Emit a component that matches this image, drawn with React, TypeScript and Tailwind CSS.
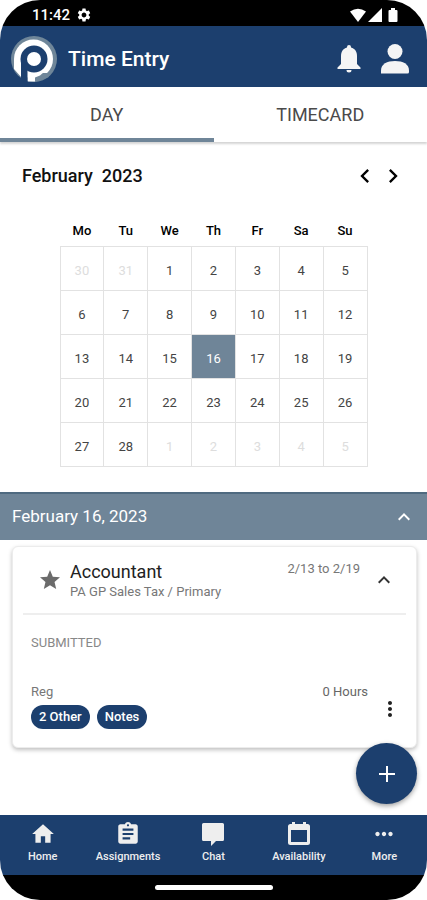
import { useState } from "react";
import type { ReactNode } from "react";
import {
  MdAssignment,
  MdHome,
  MdKeyboardArrowLeft,
  MdKeyboardArrowRight,
  MdKeyboardArrowUp,
  MdMoreHoriz,
  MdMoreVert,
  MdSettings,
  MdStar,
} from "react-icons/md";

const weekdays = ["Mo", "Tu", "We", "Th", "Fr", "Sa", "Su"];

const weeks = [
  [30, 31, 1, 2, 3, 4, 5],
  [6, 7, 8, 9, 10, 11, 12],
  [13, 14, 15, 16, 17, 18, 19],
  [20, 21, 22, 23, 24, 25, 26],
  [27, 28, 1, 2, 3, 4, 5],
];

function isOutside(week: number, day: number) {
  return (week === 0 && day > 20) || (week === 4 && day < 20);
}

function StatusBar() {
  return (
    <div className="flex h-[26px] items-center bg-black pt-1 pr-7 pl-8 text-white">
      <span className="text-[15px] leading-5 font-medium">11:42</span>
      <MdSettings className="ml-[6px] size-4" />
      <svg className="ml-auto h-4 w-[50px]" viewBox="0 0 50 16" fill="currentColor" aria-hidden="true">
        <path d="M1 4.500Q9 -1 17 4.500L9 15z" />
        <path d="M33 1v14H19z" />
        <path d="M42 1h4v2h1.500a1 1 0 0 1 1 1v10a1 1 0 0 1-1 1h-7a1 1 0 0 1-1-1V4a1 1 0 0 1 1-1H42z" />
      </svg>
    </div>
  );
}

function Logo() {
  return (
    <svg className="size-12" viewBox="0 0 48 48" aria-hidden="true">
      <circle cx="24" cy="24" r="23" fill="#6f8699" />
      <circle cx="23.500" cy="24" r="19.500" fill="#fff" />
      <path d="M25 38h12l2 4-14 5z" fill="#6f8699" />
      <path d="M25 37h9l-4 3.500-5 2z" fill="#fff" />
      <path d="M4 24v10l7.500 8.500V30zM17.500 35v11.500H25V36z" fill="#fff" />
      <path d="M11 24v24h6.500V24z" fill="#1c3f6e" />
      <circle cx="24" cy="24" r="13.500" fill="#1c3f6e" />
      <circle cx="24" cy="24" r="7" fill="#fff" />
    </svg>
  );
}

function Header() {
  return (
    <header className="flex h-[61px] items-center bg-[#1c3f6e] pt-1 pr-[18px] pl-[10px] text-white">
      <Logo />
      <h1 className="ml-[10px] text-[21px] leading-7 font-medium">Time Entry</h1>
      <button type="button" aria-label="Notifications" className="ml-auto">
        <svg className="h-7 w-6" viewBox="0 0 24 28" fill="#f5f5f5">
          <path d="M12 0a2 2 0 0 1 2 2v.6c4 1 6 4.400 6 8.400v8l3.500 3.500V24H.5v-1.500L4 19v-8c0-4 2-7.400 6-8.400V2a2 2 0 0 1 2-2zM9.500 25h5a2.500 2.500 0 0 1-5 0z" />
        </svg>
      </button>
      <button type="button" aria-label="Profile" className="ml-5">
        <svg className="h-[30px] w-7" viewBox="0 0 28 30" fill="#f5f5f5">
          <circle cx="14" cy="7.500" r="7.500" />
          <path d="M0 29.500v-3C0 20 6 17 14 17s14 3 14 9.500v1.500q0 1.500-1.500 1.500z" />
        </svg>
      </button>
    </header>
  );
}

function Tabs() {
  const [active, setActive] = useState("DAY");
  return (
    <div role="tablist" className="grid h-[55px] grid-cols-2 shadow-[0_2px_2px_#0000002b]">
      {["DAY", "TIMECARD"].map((name) => (
        <button
          key={name}
          type="button"
          role="tab"
          aria-selected={active === name}
          onClick={() => setActive(name)}
          className={
            active === name
              ? "border-b-4 border-[#6f8598] pt-1 text-lg text-[#4a4a4a]"
              : "border-b-4 border-transparent pt-1 text-lg text-[#4a4a4a]"
          }
        >
          {name}
        </button>
      ))}
    </div>
  );
}

function Calendar() {
  const [selected, setSelected] = useState(16);
  return (
    <section className="pt-5 pb-[25px]">
      <div className="flex items-center pr-5 pl-[22px]">
        <h2 className="text-lg leading-7 font-medium whitespace-pre text-[#111111]">February  2023</h2>
        <button type="button" aria-label="Previous month" className="ml-auto">
          <MdKeyboardArrowLeft className="size-7" />
        </button>
        <button type="button" aria-label="Next month">
          <MdKeyboardArrowRight className="size-7" />
        </button>
      </div>
      <table className="mx-auto mt-[26px] w-[308px] table-fixed border-collapse text-center">
        <thead>
          <tr>
            {weekdays.map((name) => (
              <th key={name} scope="col" className="h-[30px] p-0 text-[13px] font-medium text-black">
                {name}
              </th>
            ))}
          </tr>
        </thead>
        <tbody>
          {weeks.map((days, week) => (
            <tr key={week}>
              {days.map((day) => {
                const outside = isOutside(week, day);
                const chosen = !outside && day === selected;
                return (
                  <td
                    key={day}
                    className={
                      chosen
                        ? "h-11 border border-[#e2e2e2] bg-[#6f8598] p-0 text-white"
                        : outside
                          ? "h-11 border border-[#e2e2e2] p-0 text-[#dddddd]"
                          : "h-11 border border-[#e2e2e2] p-0 text-[#444444]"
                    }
                  >
                    <button
                      type="button"
                      disabled={outside}
                      onClick={() => setSelected(day)}
                      className="h-10 w-full pt-[6px] text-[13px]"
                    >
                      {day}
                    </button>
                  </td>
                );
              })}
            </tr>
          ))}
        </tbody>
      </table>
    </section>
  );
}

function Entry() {
  return (
    <article className="mt-[6px] mr-[10px] ml-3 rounded-md border border-[#ececec] bg-white px-[10px] shadow-[0_2px_4px_#00000040]">
      <div className="flex h-[68px] items-center border-b-2 border-[#eeeeee] pr-[10px] pl-[15px]">
        <MdStar className="size-6 text-[#6b6b6b]" />
        <div className="ml-2 pt-1">
          <h3 className="text-lg leading-5 text-[#222222]">Accountant</h3>
          <p className="text-[13px] leading-5 text-[#777777]">PA GP Sales Tax / Primary</p>
        </div>
        <p className="ml-auto self-start pt-3 text-[13px] leading-5 text-[#777777]">2/13 to 2/19</p>
        <button type="button" aria-label="Collapse entry" className="ml-3">
          <MdKeyboardArrowUp className="size-6 text-[#333333]" />
        </button>
      </div>
      <div className="pt-[18px] pr-1 pb-[18px] pl-2">
        <p className="text-[13px] leading-5 text-[#888888]">SUBMITTED</p>
        <div className="mt-[29px] flex">
          <div>
            <p className="text-[13px] leading-5 text-[#777777]">Reg</p>
            <div className="mt-[3px] flex gap-[7px]">
              <button type="button" className="h-6 rounded-full bg-[#1c3f6e] px-2 text-[13px] font-medium text-white">
                2 Other
              </button>
              <button type="button" className="h-6 rounded-full bg-[#1c3f6e] px-2 text-[13px] font-medium text-white">
                Notes
              </button>
            </div>
          </div>
          <p className="ml-auto text-[13px] leading-5 text-[#666666]">0 Hours</p>
          <button type="button" aria-label="Entry options" className="mt-[15px] ml-[10px] self-start">
            <MdMoreVert className="size-6 text-[#222222]" />
          </button>
        </div>
      </div>
    </article>
  );
}

function NavItem({ label, children }: { label: string; children: ReactNode }) {
  return (
    <a href="#" className="flex flex-col items-center pt-[6px] text-[11px] leading-4 font-medium text-[#eeeeee]">
      {children}
      <span className="mt-[2px]">{label}</span>
    </a>
  );
}

function BottomNav() {
  return (
    <nav className="grid h-[60px] grid-cols-5 bg-[#1c3f6e]">
      <NavItem label="Home">
        <MdHome className="size-[26px]" />
      </NavItem>
      <NavItem label="Assignments">
        <MdAssignment className="size-[26px]" />
      </NavItem>
      <NavItem label="Chat">
        <svg className="size-[26px]" viewBox="0 0 26 26" fill="currentColor" aria-hidden="true">
          <path d="M3.500 2h19A1.500 1.500 0 0 1 24 3.500v15a1.500 1.500 0 0 1-1.500 1.500H16l-5 5v-5H3.500A1.500 1.500 0 0 1 2 18.500v-15A1.500 1.500 0 0 1 3.500 2z" />
        </svg>
      </NavItem>
      <NavItem label="Availability">
        <svg className="size-[26px]" viewBox="0 0 26 26" fill="currentColor" aria-hidden="true">
          <path
            fillRule="evenodd"
            d="M6 1h3v2h8V1h3v2h1.500A2.500 2.500 0 0 1 24 5.500v16a2.500 2.500 0 0 1-2.500 2.500h-17A2.500 2.500 0 0 1 2 21.500v-16A2.500 2.500 0 0 1 4.500 3H6zM5 9v12h16V9z"
          />
        </svg>
      </NavItem>
      <NavItem label="More">
        <MdMoreHoriz className="size-[26px]" />
      </NavItem>
    </nav>
  );
}

export default function App() {
  return (
    <div className="min-h-screen bg-white font-['Roboto',sans-serif]">
      <div className="relative flex min-h-screen flex-col overflow-hidden rounded-[40px]">
        <StatusBar />
        <Header />
        <main className="flex-1">
          <Tabs />
          <Calendar />
          <section>
            <div className="flex h-12 items-center justify-between border-t-2 border-[#4f6a80] bg-[#6f8598] pr-[11px] pl-3 text-white">
              <h2 className="text-[17px]">February 16, 2023</h2>
              <button type="button" aria-label="Collapse day">
                <MdKeyboardArrowUp className="size-6" />
              </button>
            </div>
            <Entry />
          </section>
        </main>
        <BottomNav />
        <div className="flex h-[25px] justify-center bg-black pt-[10px]">
          <div className="h-[5px] w-[118px] rounded-full bg-white" />
        </div>
        <button
          type="button"
          aria-label="Add time entry"
          className="absolute right-[10px] bottom-24 flex size-[61px] items-center justify-center rounded-full bg-[#1c3f6e] shadow-[0_2px_5px_#00000060]"
        >
          <svg className="size-4" viewBox="0 0 16 16" stroke="#fff" strokeWidth="2">
            <path d="M8 0v16M0 8h16" />
          </svg>
        </button>
      </div>
    </div>
  );
}
